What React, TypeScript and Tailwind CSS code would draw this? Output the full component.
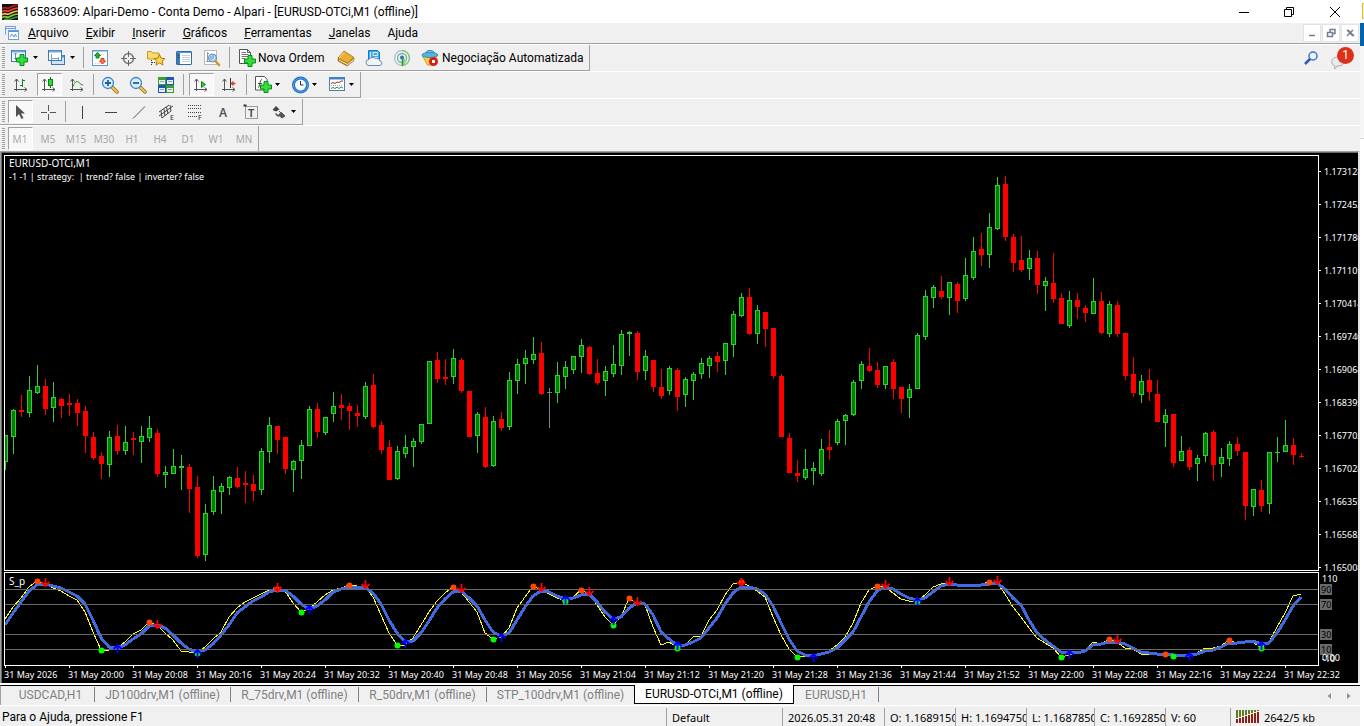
import { FunctionComponent, ReactNode } from 'react'

type Candle = [number, number, number, number, 'u' | 'd' | 'n']

// high, body top, body bottom, low, direction
const candles: Candle[] = [
  [435, 435, 462, 470, 'u'], [409, 410, 437, 454, 'u'], [395, 410, 412, 417, 'd'], [376, 390, 413, 417, 'u'],
  [365, 386, 393, 394, 'u'], [379, 386, 409, 415, 'd'], [382, 397, 408, 422, 'u'], [398, 399, 406, 418, 'd'],
  [394, 403, 405, 416, 'd'], [399, 403, 413, 426, 'd'], [406, 411, 436, 453, 'd'], [432, 437, 458, 460, 'd'],
  [452, 456, 464, 479, 'd'], [431, 437, 465, 477, 'u'], [425, 436, 451, 455, 'd'], [426, 442, 451, 455, 'u'],
  [432, 438, 440, 455, 'd'], [426, 436, 442, 463, 'u'], [416, 428, 438, 442, 'u'], [429, 433, 474, 477, 'd'],
  [466, 472, 475, 488, 'u'], [449, 466, 474, 474, 'u'], [455, 466, 468, 490, 'u'], [464, 467, 489, 513, 'd'],
  [476, 487, 556, 558, 'd'], [504, 513, 555, 561, 'u'], [476, 490, 512, 515, 'u'], [483, 486, 492, 514, 'u'],
  [476, 477, 488, 495, 'u'], [467, 478, 487, 488, 'd'], [471, 483, 485, 503, 'd'], [475, 484, 491, 501, 'd'],
  [448, 451, 490, 495, 'u'], [417, 425, 452, 463, 'u'], [426, 426, 440, 454, 'd'], [437, 437, 469, 474, 'd'],
  [460, 461, 470, 492, 'u'], [440, 445, 461, 479, 'u'], [406, 409, 446, 446, 'u'], [403, 409, 432, 438, 'd'],
  [417, 417, 433, 435, 'u'], [392, 406, 414, 422, 'u'], [394, 405, 408, 420, 'd'], [403, 406, 411, 430, 'd'],
  [405, 413, 416, 427, 'd'], [382, 386, 417, 419, 'u'], [374, 385, 427, 428, 'd'], [421, 425, 450, 454, 'd'],
  [440, 447, 480, 480, 'd'], [446, 451, 479, 480, 'u'], [435, 447, 454, 458, 'u'], [438, 441, 447, 467, 'u'],
  [424, 424, 442, 444, 'u'], [361, 361, 424, 424, 'u'], [352, 360, 379, 383, 'd'], [359, 377, 379, 385, 'd'],
  [349, 358, 377, 384, 'u'], [358, 360, 391, 393, 'd'], [391, 391, 437, 437, 'd'], [412, 414, 436, 453, 'u'],
  [407, 417, 467, 468, 'd'], [416, 421, 466, 467, 'u'], [412, 419, 428, 431, 'd'], [372, 380, 427, 430, 'u'],
  [359, 364, 381, 394, 'u'], [350, 358, 364, 384, 'u'], [337, 354, 360, 364, 'u'], [342, 353, 394, 395, 'd'],
  [388, 392, 393, 428, 'n'], [362, 375, 393, 403, 'u'], [361, 367, 377, 389, 'u'], [356, 356, 370, 374, 'u'],
  [339, 345, 357, 373, 'u'], [346, 347, 374, 375, 'd'], [359, 373, 383, 385, 'd'], [366, 371, 381, 396, 'u'],
  [345, 364, 374, 377, 'u'], [330, 334, 366, 375, 'u'], [331, 332, 334, 356, 'u'], [331, 333, 372, 380, 'd'],
  [350, 356, 371, 380, 'u'], [360, 360, 387, 392, 'd'], [369, 387, 396, 399, 'd'], [366, 368, 391, 395, 'u'],
  [368, 370, 397, 411, 'd'], [377, 379, 395, 407, 'u'], [372, 374, 381, 400, 'u'], [358, 363, 374, 379, 'u'],
  [356, 358, 366, 378, 'u'], [352, 356, 362, 372, 'd'], [343, 343, 361, 375, 'u'], [311, 314, 345, 357, 'u'],
  [293, 297, 316, 317, 'u'], [288, 297, 334, 335, 'd'], [305, 310, 334, 344, 'u'], [312, 312, 329, 347, 'd'],
  [328, 328, 376, 379, 'd'], [374, 376, 437, 437, 'd'], [433, 438, 473, 473, 'd'], [460, 473, 476, 482, 'd'],
  [449, 469, 478, 480, 'u'], [462, 468, 471, 485, 'u'], [439, 449, 474, 476, 'u'], [430, 447, 450, 460, 'd'],
  [419, 421, 443, 445, 'u'], [414, 415, 421, 445, 'u'], [380, 382, 415, 416, 'u'], [361, 364, 381, 389, 'u'],
  [348, 366, 371, 372, 'd'], [362, 370, 385, 388, 'd'], [366, 366, 385, 389, 'u'], [359, 362, 389, 399, 'd'],
  [387, 387, 399, 413, 'd'], [384, 389, 398, 418, 'u'], [333, 335, 389, 389, 'u'], [290, 296, 337, 340, 'u'],
  [285, 287, 298, 308, 'u'], [276, 291, 297, 299, 'd'], [282, 282, 298, 315, 'u'], [282, 284, 301, 313, 'd'],
  [258, 275, 299, 301, 'u'], [237, 251, 278, 280, 'u'], [233, 249, 255, 266, 'd'], [213, 227, 255, 268, 'u'],
  [177, 185, 229, 230, 'u'], [176, 184, 237, 241, 'd'], [234, 237, 263, 272, 'd'], [236, 260, 270, 272, 'd'],
  [250, 258, 269, 280, 'u'], [251, 258, 285, 294, 'd'], [277, 281, 286, 311, 'u'], [253, 283, 299, 303, 'd'],
  [293, 298, 324, 324, 'd'], [291, 300, 326, 328, 'u'], [293, 300, 307, 319, 'd'], [305, 308, 313, 322, 'd'],
  [278, 301, 314, 314, 'u'], [292, 301, 333, 334, 'd'], [301, 304, 334, 337, 'u'], [301, 305, 334, 337, 'd'],
  [333, 333, 376, 380, 'd'], [357, 374, 393, 397, 'd'], [375, 381, 395, 403, 'u'], [369, 380, 392, 401, 'd'],
  [380, 394, 422, 422, 'd'], [409, 415, 423, 447, 'u'], [414, 414, 463, 467, 'd'], [436, 451, 461, 461, 'u'],
  [447, 450, 467, 470, 'd'], [455, 458, 464, 481, 'u'], [432, 433, 456, 462, 'u'], [430, 432, 465, 481, 'd'],
  [448, 457, 464, 477, 'u'], [441, 444, 459, 466, 'u'], [437, 444, 451, 456, 'd'], [452, 452, 506, 520, 'd'],
  [489, 489, 507, 516, 'u'], [480, 490, 506, 512, 'd'], [452, 452, 504, 514, 'u'], [437, 452, 453, 462, 'u'],
  [420, 445, 452, 452, 'u'], [438, 445, 455, 465, 'd'], [453, 456, 457, 458, 'd'],
]

const slow = [
  625, 613, 602, 591, 585, 584, 586, 588, 592, 596, 604, 620, 638, 647, 648, 645, 639, 634, 626, 625,
  628, 635, 643, 649, 652, 650, 644, 635, 625, 613, 607, 601, 597, 592, 590, 590, 596, 604, 609, 606,
  600, 592, 589, 587, 587, 587, 593, 604, 620, 633, 642, 641, 633, 621, 608, 599, 592, 591, 598, 606,
  620, 632, 636, 633, 620, 607, 596, 591, 592, 596, 599, 598, 595, 594, 602, 612, 619, 617, 608, 603,
  604, 615, 632, 639, 645, 645, 642, 638, 628, 618, 604, 593, 587, 587, 589, 594, 606, 623, 639, 651,
  655, 656, 654, 652, 648, 640, 632, 617, 602, 591, 587, 589, 594, 598, 600, 598, 592, 586, 584, 585,
  585, 585, 585, 584, 583, 589, 598, 605, 620, 633, 640, 646, 652, 652, 653, 651, 645, 644, 642, 642,
  644, 648, 652, 653, 654, 654, 655, 655, 655, 654, 651, 650, 647, 643, 643, 642, 641, 644, 643, 633,
  620, 606, 597,
]

const fast = [
  619, 607, 598, 587, 581, 584, 588, 591, 596, 600, 612, 632, 650, 650, 648, 642, 634, 630, 622, 625,
  633, 640, 651, 652, 653, 647, 639, 632, 617, 608, 602, 598, 594, 590, 588, 591, 603, 612, 609, 602,
  595, 590, 588, 585, 586, 587, 597, 615, 633, 645, 645, 638, 625, 612, 601, 593, 587, 592, 602, 612,
  633, 639, 637, 628, 608, 597, 586, 590, 594, 598, 601, 597, 590, 594, 605, 617, 625, 617, 598, 604,
  605, 627, 645, 642, 647, 645, 637, 636, 620, 610, 595, 584, 582, 586, 591, 597, 617, 635, 649, 657,
  656, 656, 654, 651, 645, 637, 623, 603, 590, 586, 587, 593, 599, 601, 601, 595, 587, 584, 583, 585,
  585, 585, 584, 582, 583, 594, 607, 617, 628, 638, 643, 648, 657, 655, 653, 650, 642, 644, 639, 642,
  648, 649, 654, 654, 654, 654, 656, 655, 655, 653, 648, 648, 646, 640, 643, 642, 642, 648, 642, 627,
  613, 596, 594,
]

const topDots = [
  [37, 581], [149, 622], [277, 589], [349, 585], [453, 587], [533, 586], [581, 590], [629, 598], [741, 582],
  [877, 586], [989, 582], [1109, 639], [1165, 654], [1229, 640],
]
const lowDots = [
  [101, 650], [197, 653], [301, 612], [397, 645], [493, 639], [565, 601], [613, 625], [677, 648], [797, 657],
  [917, 601], [1061, 657], [1173, 656], [1261, 648],
]
const sellArrows = [
  [45, 583], [157, 625], [277, 588], [365, 585], [461, 589], [541, 588], [589, 592], [637, 602], [741, 583],
  [885, 585], [949, 582], [997, 581], [1117, 640],
]
const buyArrows = [
  [117, 648], [197, 653], [309, 609], [405, 643], [501, 637], [565, 599], [613, 620], [677, 645], [813, 657],
  [917, 601], [1069, 654], [1189, 656], [1261, 645],
]

const prices = [
  '1.173128', '1.172453', '1.171780', '1.171105', '1.170414', '1.169740', '1.169068', '1.168395', '1.167702',
  '1.167028', '1.166355', '1.165682', '1.165008',
]

const times = [
  '2026', '20:00', '20:08', '20:16', '20:24', '20:32', '20:40', '20:48', '20:56', '21:04', '21:12', '21:20',
  '21:28', '21:36', '21:44', '21:52', '22:00', '22:08', '22:16', '22:24', '22:32',
]

const toPoints = (values: number[]) => values.map((y, i) => `${5 + i * 8},${y}`).join(' ')

/* ---------- icons ---------- */

const Glyph: FunctionComponent<{ children: ReactNode }> = ({ children }) => (
  <svg width="18" height="18" viewBox="0 0 18 18" fill="none" className="block shrink-0" aria-hidden="true">
    {children}
  </svg>
)

const Plus: FunctionComponent<{ x: number; y: number }> = ({ x, y }) => (
  <path
    transform={`translate(${x} ${y})`}
    d="M4 .5h4V4h3.500v4H8v3.500H4V8H.5V4H4z"
    fill="#2fe03a"
    stroke="#0a8a14"
  />
)

const NewChartIcon = () => (
  <Glyph>
    <rect x=".5" y="1.500" width="14" height="11" fill="#fff" stroke="#3b78b5" />
    <path d="M1 2.500h13" stroke="#6fa6dc" strokeWidth="2" />
    <path d="M4.500 4v7M3 9.500h8M3 5.500l1.500-1.500L6 5.500" stroke="#5b8dc0" />
    <Plus x={5} y={5} />
  </Glyph>
)

const ProfilesIcon = () => (
  <Glyph>
    <rect x="3.500" y="6.500" width="13" height="9" fill="#cfe4f8" stroke="#3b78b5" />
    <path d="M4 7.500h12" stroke="#5b97d4" strokeWidth="2" />
    <rect x=".5" y="1.500" width="13" height="10" fill="#fff" stroke="#3b78b5" />
    <path d="M1 2.500h12" stroke="#6fa6dc" strokeWidth="2" />
    <path d="M3 9.500h8M3.500 5v6M10.500 8v3" stroke="#7d9fc4" />
  </Glyph>
)

const MarketIcon = () => (
  <Glyph>
    <rect x="1.500" y="1.500" width="15" height="15" fill="#fff" stroke="#5d9bd3" />
    <path d="M2 2.500h14" stroke="#a8cff0" />
    <path d="M4 14.500h5M10 5.500h4" stroke="#ccd" strokeDasharray="1 1" />
    <path d="M6.500 3.500 9.500 6.500H8v2.500H5V6.500H3.500z" fill="#27b52c" stroke="#0f8516" />
    <path d="M11.500 15 14.500 12H13V9.500h-3V12H8.500z" fill="#ff7a45" stroke="#d8380b" />
  </Glyph>
)

const CrosshairIcon = () => (
  <Glyph>
    <circle cx="9.500" cy="9.500" r="5" stroke="#777" strokeWidth="1.500" />
    <path d="M9.500 2v6M9.500 11v6M2 9.500h6M11 9.500h6" stroke="#666" />
  </Glyph>
)

const NavigatorIcon = () => (
  <Glyph>
    <path d="M.5 10V2.500h4l1 1.500H12v6z" fill="#f8dc6c" stroke="#c79b21" />
    <path d="M4.500 11v6M5 13.500h4" stroke="#333" strokeDasharray="1 1" />
    <path
      d="m12.500 5.500 1.500 3.700 4 .3-3 2.600 1 4-3.500-2.200L9 16.100l1-4-3-2.600 4-.3z"
      fill="#ffd84a"
      stroke="#b27a12"
    />
  </Glyph>
)

const TerminalIcon = () => (
  <Glyph>
    <rect x="1.500" y="2.500" width="15" height="13" rx=".5" fill="#fff" stroke="#2f6aa8" />
    <path d="M2 3.500h14" stroke="#5b97d4" strokeWidth="1" />
    <path d="M3.500 4v11" stroke="#3d79b8" strokeWidth="3" />
    <path d="M3.500 5.500v1M3.500 8v1" stroke="#123" strokeWidth="1" />
    <path d="M7 6.500h8M7 8.500h8M7 10.500h8M7 12.500h8" stroke="#c5cede" />
  </Glyph>
)

const TesterIcon = () => (
  <Glyph>
    <rect x="1.500" y="1.500" width="12" height="14" fill="#fff" stroke="#b9b9b9" />
    <path d="M4.500 3v10M3 12.500h8M4 6l2-2" stroke="#999" />
    <circle cx="9.500" cy="9" r="4" fill="#b9dcf5" stroke="#4b8ac6" />
    <path d="M8 7v4M10 6v4" stroke="#6a9cc8" />
    <path d="m12.500 12 3.500 4" stroke="#d2962a" strokeWidth="2.500" strokeLinecap="round" />
  </Glyph>
)

const OrderIcon = () => (
  <Glyph>
    <path d="M.5.500h8l3 3v11H.5z" fill="#fff" stroke="#555" />
    <path d="M8.500.500v3h3" stroke="#555" />
    <path d="M2.500 3.500H7M2.500 5.500h7M2.500 7.500h7M2.500 9.500H6" stroke="#777" />
    <Plus x={5} y={6} />
  </Glyph>
)

const BookIcon = () => (
  <Glyph>
    <path d="M1 9.500v2.500l9 5 7-5.500V9l-7 5.500z" fill="#b97a16" stroke="#95600d" strokeWidth=".6" />
    <path d="M2 11l8.500 4.500L17 10.500" stroke="#fff3cc" />
    <path d="m7 2 10 6.500-6.500 5.500L1 9z" fill="#e9b030" stroke="#a8700f" strokeWidth=".8" />
    <path d="m7 3.500-4.500 5" stroke="#ffe9a8" />
  </Glyph>
)

const CloudIcon = () => (
  <Glyph>
    <path d="M3.500 1.500h9l2 2V11h-11z" fill="#39a8f0" stroke="#1477c4" />
    <path d="M5.500 3v8M8 3.500h4.500v3H8zM8 8.500h5" stroke="#d3efff" />
    <path
      d="M4 16.500a3 3 0 0 1 0-6 4 4 0 0 1 6.500-1 3.500 3.500 0 0 1 4.500 2.500 2.300 2.300 0 0 1 0 4.500z"
      fill="#f1f5fa"
      stroke="#6d89ad"
    />
  </Glyph>
)

const SignalIcon = () => (
  <Glyph>
    <circle cx="9" cy="9" r="7.500" stroke="#b5c3c9" strokeWidth="1.300" fill="#e9f0f0" />
    <path d="M9 1.500a7.500 7.500 0 0 1 0 15" stroke="#8bcf8a" strokeWidth="1.500" />
    <circle cx="9" cy="9" r="4.500" stroke="#7fae9f" strokeWidth="1.300" />
    <path d="M9 9h1.500l3 3-3 4.500H9z" fill="#8fd68f" />
    <circle cx="9" cy="8.500" r="2" fill="#2c75b5" />
    <path d="M9.500 9v8" stroke="#27973a" strokeWidth="1.500" />
  </Glyph>
)

const AutoTradeIcon = () => (
  <Glyph>
    <path d="M1.500 7h14l-4 9h-5z" fill="#f7cf4d" stroke="#b98b1d" strokeWidth=".8" />
    <path d="M4.500 5a4.500 3.500 0 0 1 9 0" fill="#79c6ea" stroke="#2f8dbd" />
    <ellipse cx="9" cy="6" rx="8" ry="2.500" fill="#58b3df" stroke="#2b84b3" strokeWidth=".8" />
    <circle cx="12.500" cy="12.500" r="4.500" fill="#d9200f" />
    <rect x="11" y="11" width="3" height="3" fill="#fff" />
  </Glyph>
)

const Axes = () => (
  <path d="M4.500 3v12M2 13.500h13M2.500 5.500l2-2.500 2 2.500M12.500 11.500l2.500 2-2.500 2" stroke="#555" />
)

const BarsIcon = () => (
  <Glyph>
    <Axes />
    <path d="M10.500 3v8M8 9.500h2.500M10.500 4.500H13" stroke="#0f8a1a" />
  </Glyph>
)

const CandlesIcon = () => (
  <Glyph>
    <Axes />
    <path d="M10.500 1v11" stroke="#0f6a18" />
    <rect x="8.500" y="3.500" width="4" height="6" fill="#2fdc3b" stroke="#0c8217" />
  </Glyph>
)

const LineIcon = () => (
  <Glyph>
    <Axes />
    <path d="M5 10.500c2-5 4-6 6-4 1.500 1.500 2.500 2.500 4 2.500" stroke="#1c9127" />
  </Glyph>
)

const ZoomIcon: FunctionComponent<{ plus?: boolean }> = ({ plus }) => (
  <Glyph>
    <path d="m11.500 11.500 4.500 4.500" stroke="#8d6a17" strokeWidth="3.500" strokeLinecap="round" />
    <path d="m11.500 11.500 4.500 4.500" stroke="#f3c84c" strokeWidth="2" strokeLinecap="round" />
    <circle cx="7" cy="7" r="5.500" fill="#d8edfc" stroke="#3d85c8" strokeWidth="1.300" />
    <path d={plus ? 'M4 7h6M7 4v6' : 'M4 7h6'} stroke="#235f9d" strokeWidth="1.800" />
  </Glyph>
)

const TileIcon = () => (
  <Glyph>
    <path d="M1 1h8v8H1zM9 9h8v8H9z" fill="#3b9e2f" />
    <path d="M9 1h8v8H9zM1 9h8v8H1z" fill="#1f55b5" />
    <path d="M2 4h6v4H2zM10 4h6v4h-6zM2 12h6v4H2zM10 12h6v4h-6z" fill="#e8f2e8" />
    <path d="M3 5.500h4M11 5.500h4M3 13.500h4M11 13.500h4" stroke="#7da6d0" />
  </Glyph>
)

const AutoScrollIcon = () => (
  <Glyph>
    <Axes />
    <path d="M9.500 5.500v6l4-3z" fill="#2fcf3b" stroke="#0c8217" />
  </Glyph>
)

const ShiftIcon = () => (
  <Glyph>
    <Axes />
    <path d="M10.500 2v10" stroke="#333" />
    <path d="M15.500 7.500h-3M13.500 5.500l-2 2 2 2" stroke="#d4400f" strokeWidth="1.300" />
  </Glyph>
)

const IndicatorIcon = () => (
  <Glyph>
    <path d="M.5.500h9l2.500 3v10.500H.5z" fill="#fff" stroke="#555" />
    <path d="M3 11.500c2 0 1.500-8 4-8M3 7.500h4" stroke="#444" />
    <Plus x={5} y={5} />
  </Glyph>
)

const ClockIcon = () => (
  <Glyph>
    <circle cx="8.500" cy="9" r="7" fill="#f5fbff" stroke="#1d6fc4" strokeWidth="3" />
    <path d="M8.500 5v4h3" stroke="#333" />
    <circle cx="8.500" cy="9" r="7" stroke="#63aef0" strokeWidth=".8" />
  </Glyph>
)

const TemplateIcon = () => (
  <Glyph>
    <rect x=".5" y="1.500" width="15" height="13" fill="#fff" stroke="#4c7fb5" />
    <path d="M1 2.500h14" stroke="#3f83cc" strokeWidth="2" />
    <path d="m2 7.500 2-1 2 1 2-1.500 2 .5 2-1.500h2" stroke="#a0341f" />
    <path d="M2 9.500h12" stroke="#aaa" strokeDasharray="1 1" />
    <path d="m2 12.500 2-1 2 1 2-1.500 2 1.500 2-1.500 2 1" stroke="#2f8d38" />
  </Glyph>
)

const CursorIcon = () => (
  <Glyph>
    <path d="M5 2v12l3-3 2.500 5 2-1-2.500-4.500h4z" fill="#505050" />
  </Glyph>
)

const CrossIcon = () => (
  <Glyph>
    <path d="M9.500 2v6M9.500 11v6M2 9.500h6M11 9.500h6" stroke="#555" />
  </Glyph>
)

const VLineIcon = () => (
  <Glyph>
    <path d="M8.500 3v13" stroke="#444" />
  </Glyph>
)

const HLineIcon = () => (
  <Glyph>
    <path d="M3 9.500h12" stroke="#444" />
  </Glyph>
)

const TrendIcon = () => (
  <Glyph>
    <path d="M3 15.500 15 3.500" stroke="#555" />
  </Glyph>
)

const ChannelIcon = () => (
  <Glyph>
    <path d="M1 13 15 3M1 9l10-7M4 15l9-7M3 8l1 7M6 6l1 7M8.500 4 10 11M12 2l1 6" stroke="#444" />
    <text x="12" y="17" fontSize="7" fontFamily="Noto Sans, sans-serif" fill="#222">E</text>
  </Glyph>
)

const FiboIcon = () => (
  <Glyph>
    <path d="M2 2.500h14M2 5.500h14M2 9.500h14M2 13.500h9" stroke="#444" strokeDasharray="1 1" />
    <text x="12" y="17" fontSize="7" fontFamily="Noto Sans, sans-serif" fill="#222">F</text>
  </Glyph>
)

const LetterIcon = () => (
  <Glyph>
    <text x="5" y="14" fontSize="12" fontWeight="600" fontFamily="Noto Sans, sans-serif" fill="#555">A</text>
  </Glyph>
)

const LabelIcon = () => (
  <Glyph>
    <rect x="3.500" y="3.500" width="12" height="12" stroke="#444" strokeDasharray="1 1" />
    <path d="M1.500 2.500h3" stroke="#333" strokeWidth="2" />
    <text x="6" y="14" fontSize="11" fontWeight="600" fontFamily="Noto Sans, sans-serif" fill="#444">T</text>
  </Glyph>
)

const ShapesIcon = () => (
  <Glyph>
    <path d="m5 3 3.500 3.500-3.500 2L1.500 7z" fill="#444" />
    <path d="M4.500 10.500 7 13l2-2.500" stroke="#444" strokeWidth="1.200" />
    <path d="m10.500 9.500 3.500 3.500-3 2-3-2.500zM8 8l3 3" fill="#555" stroke="#555" />
  </Glyph>
)

/* ---------- toolbar parts ---------- */

const Caret = () => (
  <svg width="5" height="3" viewBox="0 0 5 3" className="shrink-0" aria-hidden="true">
    <path d="M0 0h5L2.500 3z" fill="#000" />
  </svg>
)

interface ToolProps {
  label: string
  pressed?: boolean
  tight?: boolean
  children: ReactNode
}

const Tool: FunctionComponent<ToolProps> = ({ label, pressed, children }) => (
  <div className="flex w-7 shrink-0 items-center justify-center">
    <button
      aria-label={label}
      aria-pressed={pressed}
      className={
        pressed
          ? 'flex h-[23px] w-[25px] items-center justify-center border border-t-[#a0a0a0] border-r-white border-b-white border-l-[#a0a0a0] bg-[#f8f8f8]'
          : 'flex h-[23px] w-[25px] items-center justify-center'
      }
    >
      {children}
    </button>
  </div>
)

const DropTool: FunctionComponent<ToolProps> = ({ label, tight, children }) => (
  <button
    aria-label={label}
    className={
      tight
        ? 'flex h-[23px] w-[34px] shrink-0 items-center gap-[2px] pl-[3px]'
        : 'flex h-[23px] w-[34px] shrink-0 items-center gap-1 pl-[3px]'
    }
  >
    {children}
    <Caret />
  </button>
)

const Divider: FunctionComponent<{ wide?: boolean }> = ({ wide }) => (
  <div className={wide ? 'flex w-[7px] shrink-0 pl-[3px]' : 'flex w-[5px] shrink-0 pl-[2px]'}>
    <div className="my-[2px] w-px bg-[#a0a0a0]" />
  </div>
)

const Toolbar: FunctionComponent<{ last?: boolean; children: ReactNode }> = ({ last, children }) => (
  <div
    className={
      last
        ? 'flex h-[25px] w-fit border-r border-[#a0a0a0]'
        : 'flex h-[26px] w-fit border-r border-b border-[#a0a0a0]'
    }
  >
    <div className="my-[2px] ml-[2px] w-[3px] shrink-0 bg-[repeating-linear-gradient(#a0a0a0_0_1px,#f0f0f0_1px_2px)]" />
    {children}
  </div>
)

const menu = ['Arquivo', 'Exibir', 'Inserir', 'Gráficos', 'Ferramentas', 'Janelas', 'Ajuda']
const timeframes = ['M1', 'M5', 'M15', 'M30', 'H1', 'H4', 'D1', 'W1', 'MN']

const TitleBar = () => (
  <header className="flex h-[23px] items-center bg-white">
    <svg width="16" height="16" viewBox="0 0 16 16" className="ml-[2px] shrink-0" aria-hidden="true">
      <path d="M0 0h16v16H0z" fill="#111" />
      <g fill="none" strokeWidth="1.700">
        <path d="M0 5c3-3 4 0 7-1s4-3 9-3" stroke="#c4161c" />
        <path d="M0 8c3-3 4 0 7-1s4-3 9-3" stroke="#e8452c" />
        <path d="M0 11c3-3 4 0 7-1s4-3 9-3" stroke="#f2c230" />
        <path d="M0 14c3-3 4 0 7-1s4-3 9-3" stroke="#8fc43a" />
        <path d="M2 16c3-2 4 0 7-1s4-2 7-2" stroke="#2f9a3f" />
      </g>
    </svg>
    <h1 className="ml-[5px] grow whitespace-nowrap text-[12px]">
      16583609: Alpari-Demo - Conta Demo - Alpari - [EURUSD-OTCi,M1 (offline)]
    </h1>
    <div className="flex">
      <button aria-label="Minimizar" className="flex h-[21px] w-[45px] items-center justify-center">
        <svg width="12" height="12" viewBox="0 0 12 12" stroke="#000" fill="none">
          <path d="M1 6.500h10" />
        </svg>
      </button>
      <button aria-label="Restaurar" className="flex h-[21px] w-[46px] items-center justify-center">
        <svg width="12" height="12" viewBox="0 0 12 12" stroke="#000" fill="none">
          <path d="M1.500 3.500h7v7h-7zM3.500 3.500v-2h7v7h-2" />
        </svg>
      </button>
      <button aria-label="Fechar" className="mr-[2px] flex h-[21px] w-[46px] items-center justify-center">
        <svg width="12" height="12" viewBox="0 0 12 12" stroke="#000" fill="none">
          <path d="m1 1 10 10M11 1 1 11" />
        </svg>
      </button>
    </div>
  </header>
)

const MdiButton: FunctionComponent<{ label: string; path: string }> = ({ label, path }) => (
  <button
    aria-label={label}
    className="flex size-[18px] items-center justify-center border border-[#e3e3e3] bg-white"
  >
    <svg width="10" height="10" viewBox="0 0 10 10" stroke="#6f7f90" fill="none" aria-hidden="true">
      <path d={path} strokeWidth="1.500" />
    </svg>
  </button>
)

const MenuBar = () => (
  <nav className="flex h-[21px] items-center border-b border-[#a0a0a0] text-[12px]">
    <svg width="16" height="16" viewBox="0 0 16 16" fill="none" className="mr-[2px] ml-[4px] shrink-0" aria-hidden="true">
      <path d="M1.500 9.500v-8h10v3M1 3.500h10M4 6.500l2-1" stroke="#6c9fe0" />
      <rect x="4.500" y="5.500" width="10" height="9" fill="#fff" stroke="#6c9fe0" />
      <path d="M5 6.500h9M6 12l2-3 2 3 1.500-3 1 3" stroke="#5a8fd6" />
    </svg>
    {menu.map((item) => (
      <button key={item} className="pr-[9px] pl-2 leading-5 first-of-type:pl-[6px]">
        {item === 'Ajuda' ? (
          <>
            A<u>j</u>uda
          </>
        ) : (
          <>
            <u>{item[0]}</u>
            {item.slice(1)}
          </>
        )}
      </button>
    ))}
    <div className="ml-auto flex gap-px pr-px">
      <MdiButton label="Minimizar gráfico" path="M2 7.500h6" />
      <MdiButton label="Restaurar gráfico" path="M1.500 4.500h5v4h-5zM4 4V1.500h5v4H7" />
      <MdiButton label="Fechar gráfico" path="m2 2 6 6M8 2 2 8M3 2l6 6" />
    </div>
  </nav>
)

const Toolbars = () => (
  <div className="border-t border-white">
    <div className="flex justify-between">
      <Toolbar>
        <div className="ml-[3px] mr-[2px] flex items-center gap-[3px]">
          <DropTool label="Novo gráfico"><NewChartIcon /></DropTool>
          <DropTool label="Perfis"><ProfilesIcon /></DropTool>
        </div>
        <Divider />
        <Tool label="Observação do mercado"><MarketIcon /></Tool>
        <Tool label="Janela de dados"><CrosshairIcon /></Tool>
        <Tool label="Navegador"><NavigatorIcon /></Tool>
        <Tool label="Terminal"><TerminalIcon /></Tool>
        <Tool label="Testador"><TesterIcon /></Tool>
        <Divider wide />
        <button className="flex h-[25px] w-[99px] items-center gap-px pl-[6px] text-[12px] whitespace-nowrap">
          <OrderIcon />
          <span>Nova Ordem</span>
        </button>
        <Tool label="MetaEditor"><BookIcon /></Tool>
        <Tool label="Mercado"><CloudIcon /></Tool>
        <Tool label="Sinais"><SignalIcon /></Tool>
        <button className="flex h-[25px] w-[173px] items-center gap-[3px] pl-[5px] text-[12px] whitespace-nowrap">
          <AutoTradeIcon />
          <span>Negociação Automatizada</span>
        </button>
      </Toolbar>
      <div className="flex items-center gap-3 pr-[6px]">
        <button aria-label="Buscar">
          <svg width="16" height="16" viewBox="0 0 16 16" fill="none" className="block" aria-hidden="true">
            <circle cx="10" cy="6" r="4" fill="#eef4ff" stroke="#3d6fd8" strokeWidth="1.500" />
            <path d="m7 9-5 5" stroke="#2a58c0" strokeWidth="2.500" />
          </svg>
        </button>
        <button aria-label="Mensagens" className="relative block size-[23px]">
          <svg width="16" height="14" viewBox="0 0 16 14" className="absolute bottom-0 left-0" aria-hidden="true">
            <path d="M7 1c4 0 6 2 6 4.500S11 10 8 10H6l-2 3-.5-3.500C1.500 9 .7 7.500.7 5.500.7 3 3 1 7 1z" fill="#e9e9ef" stroke="#aaa" />
          </svg>
          <span className="absolute top-0 right-0 flex size-[17px] items-center justify-center rounded-full bg-[#dd3018] text-[12px] leading-none text-white">
            1
          </span>
        </button>
      </div>
    </div>
    <div className="border-t border-white">
      <Toolbar>
        <div className="w-[2px]" />
        <Tool label="Barras"><BarsIcon /></Tool>
        <Tool label="Candles" pressed><CandlesIcon /></Tool>
        <Tool label="Linha"><LineIcon /></Tool>
        <Divider />
        <Tool label="Mais zoom"><ZoomIcon plus /></Tool>
        <Tool label="Menos zoom"><ZoomIcon /></Tool>
        <Tool label="Lado a lado"><TileIcon /></Tool>
        <Divider wide />
        <Tool label="Rolagem automática" pressed><AutoScrollIcon /></Tool>
        <Tool label="Deslocar gráfico"><ShiftIcon /></Tool>
        <Divider wide />
        <div className="ml-[2px] flex items-center gap-[3px]">
          <DropTool label="Indicadores" tight><IndicatorIcon /></DropTool>
          <DropTool label="Períodos" tight><ClockIcon /></DropTool>
          <DropTool label="Modelos" tight><TemplateIcon /></DropTool>
        </div>
      </Toolbar>
    </div>
    <div className="border-t border-white">
      <Toolbar>
        <div className="w-px" />
        <Tool label="Cursor" pressed><CursorIcon /></Tool>
        <Tool label="Mira"><CrossIcon /></Tool>
        <Divider wide />
        <Tool label="Linha vertical"><VLineIcon /></Tool>
        <Tool label="Linha horizontal"><HLineIcon /></Tool>
        <Tool label="Linha de tendência"><TrendIcon /></Tool>
        <Tool label="Canal"><ChannelIcon /></Tool>
        <Tool label="Fibonacci"><FiboIcon /></Tool>
        <Tool label="Texto"><LetterIcon /></Tool>
        <Tool label="Etiqueta"><LabelIcon /></Tool>
        <div className="ml-[3px] flex items-center">
          <DropTool label="Setas" tight><ShapesIcon /></DropTool>
        </div>
      </Toolbar>
    </div>
    <div className="border-t border-white">
      <Toolbar last>
        <div className="w-px" />
        {timeframes.map((tf, i) => (
          <Tool key={tf} label={tf} pressed={i === 0}>
            <span className="pt-px font-['Noto_Sans',sans-serif] text-[10px] text-[#a6a6a6]">{tf}</span>
          </Tool>
        ))}
      </Toolbar>
    </div>
  </div>
)

/* ---------- chart ---------- */

const PriceChart = () => (
  <svg width="1313" height="414" viewBox="5 156 1313 414" shapeRendering="crispEdges" className="block">
    {candles.map(([high, top, bottom, low, dir], i) => {
      const x = 5 + i * 8
      const color = dir === 'u' ? '#32cd32' : dir === 'd' ? '#ff0000' : '#808080'
      return (
        <g key={x} fill={color}>
          <rect x={x} y={high} width="1" height={low - high} />
          <rect x={x - 2} y={top} width="5" height={bottom - top} />
          {dir === 'u' && bottom - top > 2 && (
            <rect x={x - 1} y={top + 1} width="3" height={bottom - top - 2} fill="#008000" />
          )}
        </g>
      )
    })}
  </svg>
)

const OscillatorChart = () => (
  <svg width="1313" height="92" viewBox="5 573 1313 92" fill="none" className="block">
    <polyline points={toPoints(fast)} stroke="#ffff00" shapeRendering="crispEdges" />
    <polyline points={toPoints(slow)} stroke="#4169e1" strokeWidth="3" strokeLinejoin="round" shapeRendering="crispEdges" />
    <path d="M5 589.500h1313M5 604.500h1313M5 634.500h1313M5 649.500h1313" stroke="#696969" />
    {topDots.map(([x, y]) => (
      <circle key={x} cx={x + 0.5} cy={y + 0.5} r="3" fill="#ff4500" />
    ))}
    {lowDots.map(([x, y]) => (
      <circle key={x} cx={x + 0.5} cy={y + 0.5} r="3" fill="#00ff00" />
    ))}
    {sellArrows.map(([x, y]) => (
      <path
        key={x}
        transform={`translate(${x} ${y})`}
        d="M.5-5v8M-3.500-1 .5 3 4.500-1"
        stroke="#ff0000"
        strokeWidth="1.800"
      />
    ))}
    {buyArrows.map(([x, y]) => (
      <path
        key={x}
        transform={`translate(${x} ${y})`}
        d="M.5 5v-8M-3.500 1 .5-3 4.500 1"
        stroke="#0000ff"
        strokeWidth="1.800"
      />
    ))}
  </svg>
)

const Level: FunctionComponent<{ value: number }> = ({ value }) => (
  <div className="flex h-[11px] items-center">
    <span className="bg-[#696969] px-px leading-[11px] text-black">{value}</span>
  </div>
)

const ChartWindow = () => (
  <main className="overflow-hidden border-t border-r-2 border-l border-t-[#a0a0a0] border-r-[#e3e3e3] border-l-[#a0a0a0]">
    <div className="border-t border-l border-[#696969] bg-black pt-[2px] pl-[2px] font-['Noto_Sans',sans-serif] text-[9px] text-white">
      <div className="flex">
        <section className="relative h-[416px] min-w-0 flex-1 overflow-hidden border border-white">
          <PriceChart />
          <div className="absolute top-px left-1 leading-[13px] whitespace-pre">
            <p className="text-[10px]">EURUSD-OTCi,M1</p>
            <p>{'-1 -1 | strategy:  | trend? false | inverter? false'}</p>
          </div>
        </section>
        <ul className="h-[416px] w-[39px] shrink-0">
          {prices.map((price) => (
            <li key={price} className="flex h-[33px] items-center gap-[3px] overflow-hidden">
              <span className="h-px w-[2px] shrink-0 bg-white" />
              {price}
            </li>
          ))}
        </ul>
      </div>
      <div className="mt-px flex">
        <section className="relative h-[94px] min-w-0 flex-1 overflow-hidden border border-white">
          <OscillatorChart />
          <p className="absolute top-0 left-1 text-[10px] leading-4">S_p</p>
        </section>
        <div className="relative h-[94px] w-[39px] shrink-0 pl-px">
          <p className="mt-[2px] pl-[2px] leading-[10px]">110</p>
          <Level value={90} />
          <div className="h-1" />
          <Level value={70} />
          <div className="h-[19px]" />
          <Level value={30} />
          <div className="h-1" />
          <Level value={10} />
          <span className="absolute bottom-[2px] left-[3px] leading-3">0.00</span>
          <span className="absolute bottom-px left-[3px] leading-3">-10</span>
        </div>
      </div>
      <div className="flex h-[17px] overflow-hidden pl-px">
        {times.map((time) => (
          <div key={time} className="relative w-16 shrink-0 pt-[3px] leading-3 whitespace-nowrap">
            <span className="absolute top-0 left-0 h-[2px] w-px bg-white" />
            <span className="-ml-px">31 May {time}</span>
          </div>
        ))}
      </div>
    </div>
  </main>
)

/* ---------- bottom bars ---------- */

const tabs = [
  { name: 'USDCAD,H1', width: 'w-[88px]' },
  { name: 'JD100drv,M1 (offline)', width: 'w-[136px]' },
  { name: 'R_75drv,M1 (offline)', width: 'w-[128px]' },
  { name: 'R_50drv,M1 (offline)', width: 'w-[128px]' },
  { name: 'STP_100drv,M1 (offline)', width: 'w-[147px]' },
  { name: 'EURUSD-OTCi,M1 (offline)', width: 'w-[160px]' },
  { name: 'EURUSD,H1', width: 'w-[85px]' },
]

const TabBar = () => (
  <div className="flex h-[20px] text-[12px] text-[#808080]">
    <div className="w-[7px] shrink-0 border-t border-l border-t-black border-l-[#a0a0a0]" />
    {tabs.map(({ name, width }, i) =>
      i === 5 ? (
        <button
          key={name}
          className={`${width} h-[19px] shrink-0 border-x border-b border-black bg-white leading-[18px] whitespace-nowrap text-black`}
        >
          {name}
        </button>
      ) : (
        <button key={name} className={`${width} h-[19px] shrink-0 border-t border-black pt-px pb-[2px] whitespace-nowrap`}>
          <span
            className={
              i === 4
                ? 'flex h-full items-center justify-center'
                : 'flex h-full items-center justify-center border-r border-[#808080]'
            }
          >
            {name}
          </span>
        </button>
      )
    )}
    <div className="flex grow items-center justify-end gap-3 border-t border-black pr-[8px]">
      <button aria-label="Abas anteriores">
        <svg width="7" height="8" viewBox="0 0 7 8" className="block" aria-hidden="true">
          <path d="M5 1v6L1.500 4z" fill="#909090" />
        </svg>
      </button>
      <button aria-label="Próximas abas">
        <svg width="7" height="8" viewBox="0 0 7 8" className="block" aria-hidden="true">
          <path d="M2 1v6l3.500-3z" fill="#909090" />
        </svg>
      </button>
    </div>
  </div>
)

const status = [
  { text: 'Default', width: 'w-[116px]' },
  { text: '2026.05.31 20:48', width: 'w-[102px]' },
  { text: 'O: 1.1689150', width: 'w-[71px]' },
  { text: 'H: 1.1694750', width: 'w-[71px]' },
  { text: 'L: 1.1687850', width: 'w-[68px]' },
  { text: 'C: 1.1692850', width: 'w-[71px]' },
  { text: 'V: 60', width: 'w-[65px]' },
]

const StatusBar = () => (
  <footer className="flex min-h-[21px] grow items-stretch border-t border-white pt-[2px] text-[12px] leading-[19px] whitespace-nowrap">
    <p className="grow pl-[2px]">Para o Ajuda, pressione F1</p>
    {status.map(({ text, width }) => (
      <p
        key={text}
        className={`${width} shrink-0 overflow-hidden border-l border-[#a0a0a0] pl-[5px] font-['Noto_Sans',sans-serif] text-[11px]`}
      >
        {text}
      </p>
    ))}
    <div className="flex w-[130px] shrink-0 gap-1 border-l border-[#a0a0a0] pl-[5px] font-['Noto_Sans',sans-serif] text-[11px]">
      <svg width="24" height="16" viewBox="0 0 24 16" shapeRendering="crispEdges" className="block" aria-hidden="true">
        {[0, 1, 2, 3, 4, 5, 6, 7].map((n) => (
          <g key={n}>
            <rect x={n * 3} y="2" width="2" height={8 - n} fill="#5f7d1e" />
            <rect x={n * 3} y={11 - n} width="2" height={4 + n} fill="#8e1f12" />
          </g>
        ))}
      </svg>
      <span>2642/5 kb</span>
    </div>
  </footer>
)

export default function App() {
  return (
    <div className="flex min-h-screen bg-white font-[Roboto,'Noto_Sans',sans-serif] text-black">
      <div className="flex min-w-0 flex-1 flex-col bg-[#f0f0f0]">
        <TitleBar />
        <MenuBar />
        <Toolbars />
        <ChartWindow />
        <div className="h-[2px] bg-white" />
        <TabBar />
        <StatusBar />
      </div>
      <aside className="w-1 shrink-0">
        <div className="h-[23px] pt-[3px] pl-[2px]">
          <div className="h-4 border border-r-0 border-[#e0b83a] bg-[#fff2b8]" />
        </div>
        <div className="h-[23px] bg-[#0063b1]" />
        <div className="h-[93px] border-b border-[#d8d8d8] bg-[#f6f6f6]" />
      </aside>
    </div>
  )
}
